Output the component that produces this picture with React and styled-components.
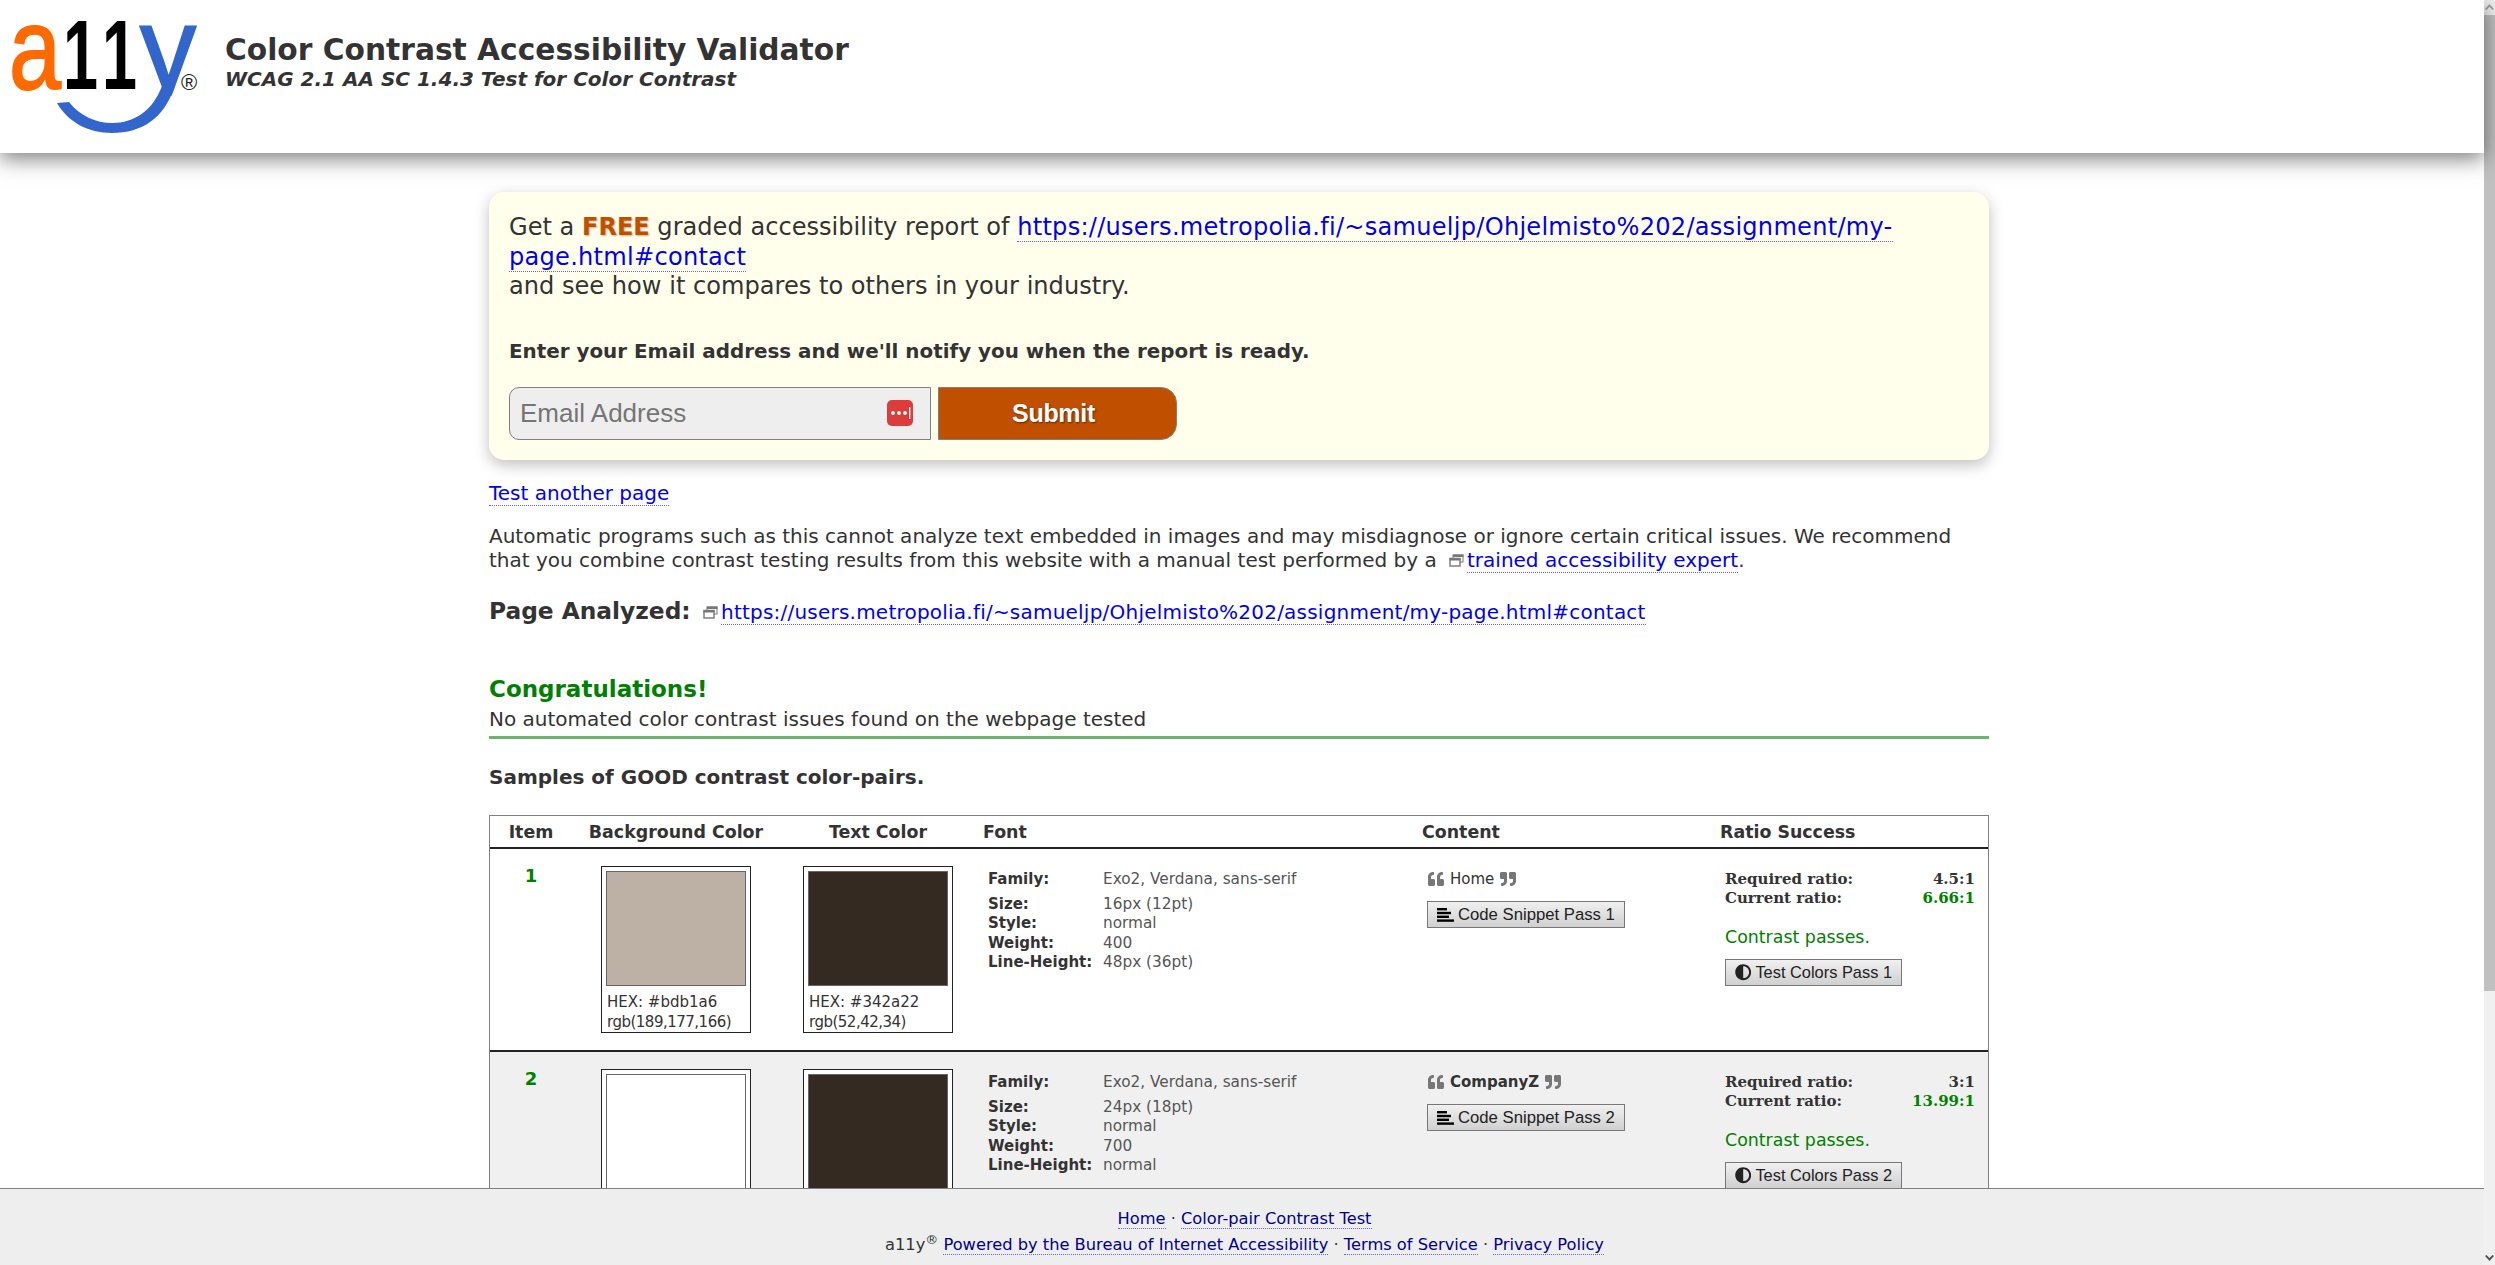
import React from "react";
import styled, { createGlobalStyle } from "styled-components";
import { FaAdjust, FaQuoteLeft, FaQuoteRight } from "react-icons/fa";

const GlobalStyle = createGlobalStyle`
  html, body {
    margin: 0;
    height: 100%;
    overflow: hidden;
    background: #fff;
    color: #333;
    font-family: "DejaVu Sans", Verdana, sans-serif;
  }
`;

const samples = [
  {
    id: 1,
    bgHex: "#bdb1a6",
    bgRgb: "rgb(189,177,166)",
    textHex: "#342a22",
    textRgb: "rgb(52,42,34)",
    size: "16px (12pt)",
    weight: "400",
    lineHeight: "48px (36pt)",
    content: "Home",
    bold: false,
    required: "4.5:1",
    current: "6.66:1",
  },
  {
    id: 2,
    bgHex: "#ffffff",
    bgRgb: "rgb(255,255,255)",
    textHex: "#342a22",
    textRgb: "rgb(52,42,34)",
    size: "24px (18pt)",
    weight: "700",
    lineHeight: "normal",
    content: "CompanyZ",
    bold: true,
    required: "3:1",
    current: "13.99:1",
  },
];

const Logo = () => (
  <svg width="200" height="140" viewBox="0 0 200 140" aria-label="a11y">
    <defs>
      <clipPath id="yclip">
        <rect x="130" y="0" width="70" height="96" />
      </clipPath>
    </defs>
    <text x="9" y="89" fontFamily="Liberation Sans" fontSize="117" fill="#ff6a00" stroke="#ff6a00" strokeWidth="2" textLength="52" lengthAdjust="spacingAndGlyphs">a</text>
    <text x="63" y="89" fontFamily="Liberation Sans" fontWeight="700" fontSize="99" fill="#000" textLength="35" lengthAdjust="spacingAndGlyphs">1</text>
    <text x="102" y="89" fontFamily="Liberation Sans" fontWeight="700" fontSize="99" fill="#000" textLength="35" lengthAdjust="spacingAndGlyphs">1</text>
    <g clipPath="url(#yclip)">
      <text x="140" y="89" fontFamily="Liberation Sans" fontSize="118" fill="#3366cc" stroke="#3366cc" strokeWidth="2" textLength="56" lengthAdjust="spacingAndGlyphs">y</text>
    </g>
    <path d="M57 103 L69 102 C80 116 96 123 112 123 C135 123 153 110 162 86 L174 88 C164 118 142 133 112 133 C88 133 68 122 57 103 Z" fill="#3366cc" />
    <text x="181" y="90" fontFamily="Liberation Sans" fontSize="22" fill="#222">®</text>
  </svg>
);

const NewWindowIcon = () => (
  <WindowSvg width="15" height="13" viewBox="0 0 15 13">
    <rect x="4" y="1" width="10" height="7" fill="#fff" stroke="#777" />
    <rect x="4" y="0.5" width="10.5" height="2.5" fill="#777" />
    <rect x="1" y="4.5" width="10" height="7.5" fill="#fff" stroke="#777" strokeWidth="1.4" />
    <rect x="0.5" y="4" width="11" height="2.5" fill="#777" />
  </WindowSvg>
);

const PasswordIcon = () => (
  <svg width="26" height="26" viewBox="0 0 26 26">
    <rect width="26" height="26" rx="5" fill="#db3d3d" />
    <circle cx="6" cy="13" r="1.9" fill="#fff" />
    <circle cx="12" cy="13" r="1.9" fill="#fff" />
    <circle cx="18" cy="13" r="1.9" fill="#fff" />
    <rect x="22" y="7" width="1.4" height="12" fill="#fff" />
  </svg>
);

const BarsIcon = () => (
  <svg width="17" height="14" viewBox="0 0 17 14" fill="#000">
    <rect x="0" y="0" width="10" height="2.4" />
    <rect x="0" y="3.8" width="14" height="2.4" />
    <rect x="0" y="7.6" width="12" height="2.4" />
    <rect x="0" y="11.4" width="17" height="2.4" />
  </svg>
);

export default function App() {
  return (
    <>
      <GlobalStyle />
      <Frame>
        <Page>
          <Header>
            <Logo />
            <Titles>
              <Title>Color Contrast Accessibility Validator</Title>
              <Subtitle>WCAG 2.1 AA SC 1.4.3 Test for Color Contrast</Subtitle>
            </Titles>
          </Header>
          <Main>
            <Content>
              <Card>
                <CardLine>
                  Get a <Free>FREE</Free> graded accessibility report of{" "}
                  <Link href="#" $spacing={0.25}>https://users.metropolia.fi/~samueljp/Ohjelmisto%202/assignment/my-page.html#contact</Link>
                  <br />
                  and see how it compares to others in your industry.
                </CardLine>
                <Prompt>Enter your Email address and we'll notify you when the report is ready.</Prompt>
                <EmailForm>
                  <InputBox>
                    <Placeholder>Email Address</Placeholder>
                    <PasswordIcon />
                  </InputBox>
                  <SubmitButton type="button">Submit</SubmitButton>
                </EmailForm>
              </Card>

              <TestLink><Link href="#">Test another page</Link></TestLink>
              <Note>
                Automatic programs such as this cannot analyze text embedded in images and may misdiagnose or ignore certain critical issues. We recommend that you combine contrast testing results from this website with a manual test performed by a{" "}
                <NewWindowIcon /><Link href="#">trained accessibility expert</Link>.
              </Note>
              <Analyzed>
                <strong>Page Analyzed:</strong>{" "}
                <NewWindowIcon /><Link href="#" $spacing={0.22}>https://users.metropolia.fi/~samueljp/Ohjelmisto%202/assignment/my-page.html#contact</Link>
              </Analyzed>

              <Congrats>Congratulations!</Congrats>
              <NoIssues>No automated color contrast issues found on the webpage tested</NoIssues>
              <Samples>Samples of GOOD contrast color-pairs.</Samples>

              <Table>
                <HeadRow>
                  <HeadCell $w={82} $center>Item</HeadCell>
                  <HeadCell $w={208} $center>Background Color</HeadCell>
                  <HeadCell $w={196} $center>Text Color</HeadCell>
                  <HeadCell $w={446} $pad={7}>Font</HeadCell>
                  <HeadCell $w={298}>Content</HeadCell>
                  <HeadCell>Ratio Success</HeadCell>
                </HeadRow>
                {samples.map((s) => (
                  <Row key={s.id} $alt={s.id % 2 === 0}>
                    <ItemNo>{s.id}</ItemNo>
                    <Swatch hex={s.bgHex} rgb={s.bgRgb} />
                    <Swatch hex={s.textHex} rgb={s.textRgb} />
                    <FontInfo>
                      <FontLabel>Family:</FontLabel><FontValue>Exo2, Verdana, sans-serif</FontValue>
                      <FontLabel>Size:</FontLabel><FontValue>{s.size}</FontValue>
                      <FontLabel>Style:</FontLabel><FontValue>normal</FontValue>
                      <FontLabel>Weight:</FontLabel><FontValue>{s.weight}</FontValue>
                      <FontLabel>Line-Height:</FontLabel><FontValue>{s.lineHeight}</FontValue>
                    </FontInfo>
                    <ContentCell>
                      <Quoted $bold={s.bold}>
                        <FaQuoteLeft /> <span>{s.content}</span> <FaQuoteRight />
                      </Quoted>
                      <ActionButton type="button" $top={11}><BarsIcon /> Code Snippet Pass {s.id}</ActionButton>
                    </ContentCell>
                    <RatioCell>
                      <RatioRow><b>Required ratio:</b><b>{s.required}</b></RatioRow>
                      <RatioRow><b>Current ratio:</b><Current>{s.current}</Current></RatioRow>
                      <Passes>Contrast passes.</Passes>
                      <ActionButton type="button" $top={10} $size={16.4}><FaAdjust /> Test Colors Pass {s.id}</ActionButton>
                    </RatioCell>
                  </Row>
                ))}
              </Table>
            </Content>
          </Main>
          <Footer>
            <FooterLine>
              <FooterLink href="#">Home</FooterLink> · <FooterLink href="#">Color-pair Contrast Test</FooterLink>
            </FooterLine>
            <FooterLine>
              a11y<sup>®</sup> <FooterLink href="#">Powered by the Bureau of Internet Accessibility</FooterLink> · <FooterLink href="#">Terms of Service</FooterLink> · <FooterLink href="#">Privacy Policy</FooterLink>
            </FooterLine>
          </Footer>
        </Page>
        <Scrollbar>
          <ScrollButton>
            <svg width="11" height="15" viewBox="0 0 11 15"><path d="M5.5 4 L10 9 L8.5 10 L5.5 7 L2.5 10 L1 9 Z" fill="#a3a3a3" /></svg>
          </ScrollButton>
          <ScrollThumb />
          <ScrollButton>
            <svg width="11" height="15" viewBox="0 0 11 15"><path d="M5.5 11 L10 6 L8.5 5 L5.5 8 L2.5 5 L1 6 Z" fill="#505050" /></svg>
          </ScrollButton>
        </Scrollbar>
      </Frame>
    </>
  );
}

function Swatch({ hex, rgb }) {
  return (
    <SwatchBox>
      <SwatchColor style={{ background: hex }} />
      <SwatchText>HEX: {hex}</SwatchText>
      <SwatchText $tight>{rgb}</SwatchText>
    </SwatchBox>
  );
}

const Frame = styled.div`
  display: flex;
  width: 2495px;
  height: 1265px;
  overflow: hidden;
`;

const Page = styled.div`
  flex: 1;
  min-width: 0;
  display: flex;
  flex-direction: column;
`;

const Scrollbar = styled.div`
  width: 11px;
  display: flex;
  flex-direction: column;
  background: #f0f0f0;
`;

const ScrollButton = styled.div`
  height: 15px;
  display: flex;
`;

const ScrollThumb = styled.div`
  height: 976px;
  background: #c0c0c0;
  margin-bottom: auto;
`;

const Header = styled.header`
  position: relative;
  z-index: 2;
  height: 153px;
  flex: none;
  display: flex;
  align-items: flex-start;
  background: #fff;
  box-shadow: 0 6px 20px rgba(0, 0, 0, 0.5);
`;

const Titles = styled.div`
  margin: 30px 0 0 25px;
`;

const Title = styled.h1`
  margin: 0;
  font-size: 29.7px;
  line-height: 40px;
  font-weight: 700;
`;

const Subtitle = styled.h2`
  margin: 0;
  font-size: 20px;
  line-height: 19px;
  font-weight: 700;
  font-style: italic;
`;

const WindowSvg = styled.svg`
  margin: 0 3px 0 6px;
  vertical-align: 0;
`;

const Main = styled.main`
  flex: 1;
  min-height: 0;
  overflow: hidden;
`;

const Content = styled.div`
  width: 1500px;
  margin-left: 489px;
  padding-top: 39px;
`;

const Card = styled.section`
  height: 268px;
  box-sizing: border-box;
  padding: 21px 20px 0;
  border-radius: 15px;
  background: #ffffec;
  box-shadow: 0 5px 15px rgba(0, 0, 0, 0.25);
`;

const CardLine = styled.p`
  margin: 0;
  font-size: 24.1px;
  line-height: 29.5px;
`;

const Free = styled.strong`
  color: #c05000;
  text-shadow: 1px 1px 2px rgba(0, 0, 0, 0.3);
  font-size: 24px;
`;

const Link = styled.a`
  color: #0000ee;
  text-decoration: none;
  border-bottom: 1px dotted #6666dd;
  letter-spacing: ${(p) => p.$spacing || 0}px;
`;

const Prompt = styled.p`
  margin: 35px 0 0;
  font-size: 19.9px;
  font-weight: 700;
  line-height: 30px;
`;

const EmailForm = styled.div`
  display: flex;
  gap: 7px;
  margin-top: 20px;
`;

const InputBox = styled.div`
  width: 422px;
  height: 53px;
  box-sizing: border-box;
  display: flex;
  align-items: center;
  justify-content: space-between;
  padding: 0 17px 0 10px;
  border: 1px solid #808080;
  border-radius: 10px 0 0 10px;
  background: #eee;
`;

const Placeholder = styled.span`
  font-family: "Liberation Sans", Arial, sans-serif;
  font-size: 26px;
  color: #757575;
`;

const SubmitButton = styled.button`
  width: 239px;
  height: 53px;
  padding: 0 8px 0 0;
  border: 1px solid #808080;
  border-radius: 0 16px 16px 0;
  background: #c05000;
  color: #fff;
  font-family: "Liberation Sans", Arial, sans-serif;
  font-size: 25px;
  font-weight: 700;
  letter-spacing: -0.3px;
  text-shadow: 1px 1px 2px rgba(0, 0, 0, 0.5);
`;

const TestLink = styled.p`
  margin: 20px 0 0;
  font-size: 20px;
  line-height: 26px;
`;

const Note = styled.p`
  margin: 18px 0 0;
  font-size: 20px;
  line-height: 24px;
`;

const Analyzed = styled.p`
  margin: 25px 0 0;
  font-size: 20px;
  line-height: 28px;
  strong {
    font-size: 23.3px;
  }
`;

const Congrats = styled.h2`
  margin: 48px 0 0;
  font-size: 23px;
  line-height: 30px;
  color: #008000;
`;

const NoIssues = styled.p`
  margin: 2px 0 0;
  padding-bottom: 4px;
  font-size: 20px;
  line-height: 26px;
  border-bottom: 3px solid #6cb56c;
`;

const Samples = styled.p`
  margin: 23px 0 0;
  font-size: 20px;
  line-height: 30px;
  font-weight: 700;
`;

const Table = styled.div`
  margin-top: 23px;
  border: 1px solid #808080;
  border-bottom: none;
`;

const HeadRow = styled.div`
  display: flex;
  height: 33px;
  box-sizing: border-box;
  align-items: center;
  border-bottom: 2px solid #222;
`;

const HeadCell = styled.div`
  width: ${(p) => (p.$w ? `${p.$w}px` : "auto")};
  flex: ${(p) => (p.$w ? "none" : "1")};
  box-sizing: border-box;
  padding-left: ${(p) => p.$pad || 0}px;
  text-align: ${(p) => (p.$center ? "center" : "left")};
  font-size: 17.4px;
  font-weight: 700;
`;

const Row = styled.div`
  display: flex;
  height: 203px;
  border-bottom: 2px solid #222;
  box-sizing: border-box;
  background: ${(p) => (p.$alt ? "#f0f0f0" : "#fff")};
  align-items: flex-start;
`;

const ItemNo = styled.div`
  width: 111px;
  flex: none;
  box-sizing: border-box;
  padding: 16px 29px 0 0;
  text-align: center;
  font-size: 18px;
  font-weight: 700;
  color: #008000;
`;

const SwatchBox = styled.div`
  width: 150px;
  height: 167px;
  flex: none;
  box-sizing: border-box;
  margin: 17px 52px 0 0;
  padding: 4px;
  border: 1px solid #222;
  background: #fff;
`;

const SwatchColor = styled.div`
  height: 115px;
  margin-bottom: 7px;
  border: 1px solid #666;
  box-sizing: border-box;
`;

const SwatchText = styled.div`
  padding-left: 1px;
  font-size: 15px;
  line-height: 19.5px;
  letter-spacing: ${(p) => (p.$tight ? "-0.5px" : "0")};
  white-space: nowrap;
`;

const FontInfo = styled.div`
  width: 439px;
  flex: none;
  box-sizing: border-box;
  margin: 21px 0 0 -17px;
  display: grid;
  grid-template-columns: 115px 1fr;
  grid-template-rows: 25px repeat(4, 19.3px);
  font-size: 15px;
  line-height: 19px;
`;

const FontLabel = styled.div`
  font-weight: 700;
`;

const FontValue = styled.div`
  font-size: 15.3px;
  color: #555;
`;

const ContentCell = styled.div`
  width: 297px;
  flex: none;
  padding-top: 19px;
`;

const Quoted = styled.div`
  display: flex;
  align-items: center;
  gap: 5px;
  height: 22px;
  font-size: 15px;
  font-weight: ${(p) => (p.$bold ? 700 : 400)};
  svg {
    width: 18px;
    height: 16px;
    color: #777;
  }
`;

const ActionButton = styled.button`
  display: inline-flex;
  align-items: center;
  gap: 4px;
  height: 27px;
  margin-top: ${(p) => p.$top}px;
  padding: 0 9px;
  border: 1px solid #777;
  background: linear-gradient(#f0f0f0, #d0d0d0);
  color: #222;
  font-family: "Liberation Sans", Arial, sans-serif;
  font-size: ${(p) => p.$size || 16.7}px;
  white-space: nowrap;
  > svg {
    flex: none;
  }
  > svg:not([width]) {
    width: 15px;
    height: 15px;
    color: #111;
  }
`;

const RatioCell = styled.div`
  flex: 1;
  padding: 21px 13px 0 1px;
`;

const RatioRow = styled.div`
  display: flex;
  justify-content: space-between;
  font-family: "DejaVu Serif", serif;
  font-size: 15px;
  line-height: 19px;
`;

const Current = styled.b`
  color: #008000;
`;

const Passes = styled.div`
  margin-top: 17px;
  font-size: 17.4px;
  line-height: 24px;
  color: #008000;
`;

const Footer = styled.footer`
  position: relative;
  z-index: 2;
  height: 77px;
  flex: none;
  box-sizing: border-box;
  padding: 17px 0 0 5px;
  border-top: 1px solid #808080;
  background: #eee;
  text-align: center;
  font-size: 16.25px;
`;

const FooterLine = styled.div`
  line-height: 26px;
  sup {
    font-size: 13px;
    line-height: 0;
  }
`;

const FooterLink = styled.a`
  color: #00008b;
  text-decoration: none;
  border-bottom: 1px dotted #6666dd;
`;
